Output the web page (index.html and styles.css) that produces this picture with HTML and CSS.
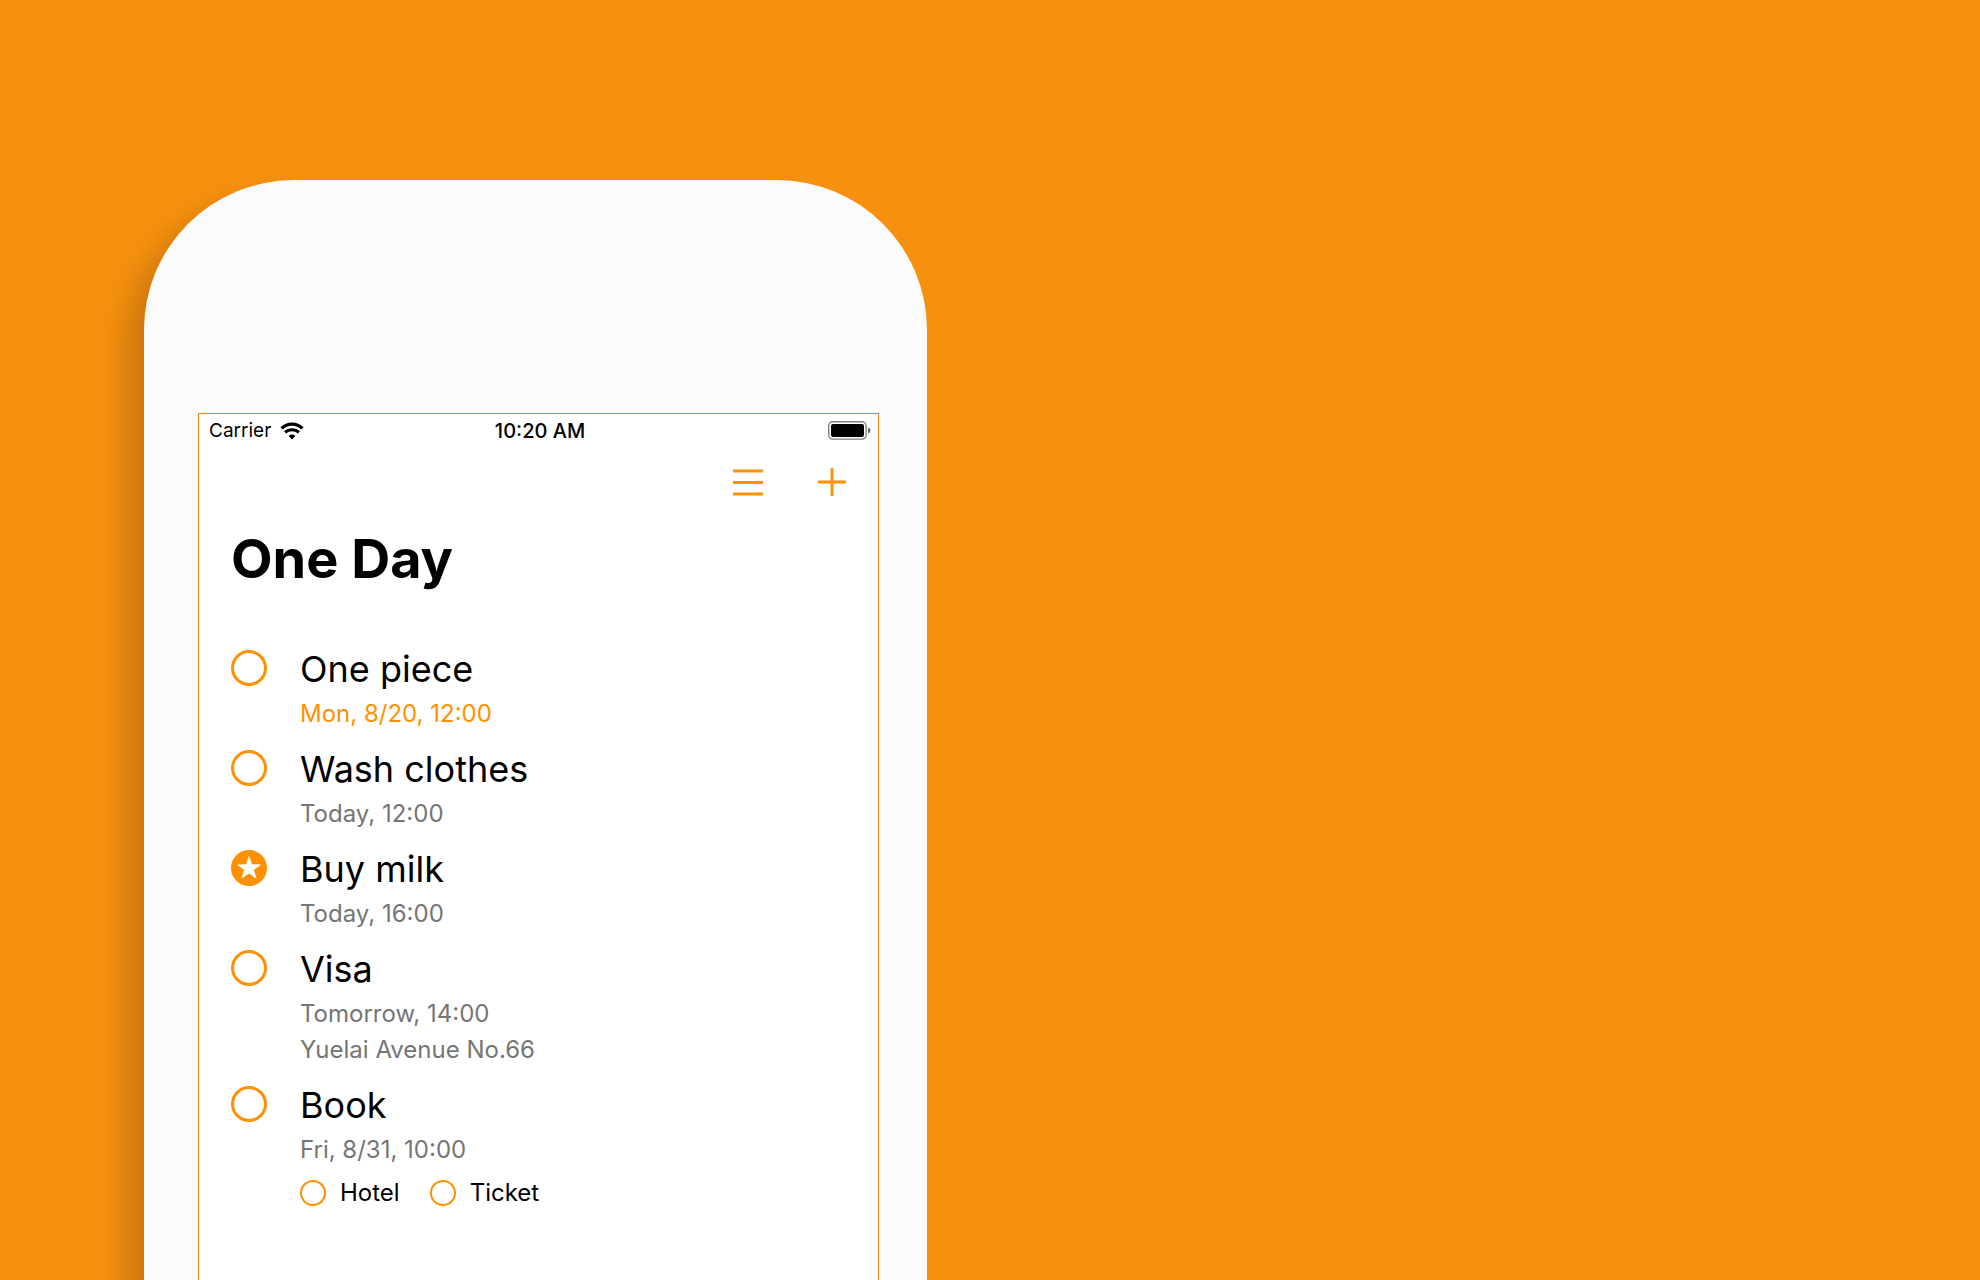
FILE: index.html
```html
<!DOCTYPE html>
<html lang="en">
<head>
<meta charset="utf-8">
<meta name="viewport" content="width=device-width, initial-scale=1">
<title>One Day</title>
<link rel="stylesheet" href="styles.css">
</head>
<body>
<main class="stage">
  <div class="phone">
    <div class="screen">
      <div class="status">
        <div class="status-side">
          <span>Carrier</span>
          <svg class="wifi" width="24" height="18" viewBox="0 0 24 18" aria-hidden="true">
            <path d="M1.5 6.4A15 15 0 0 1 22.5 6.4" fill="none" stroke="#000" stroke-width="3.2"/>
            <path d="M5.1 10.4A10 10 0 0 1 18.900 10.4" fill="none" stroke="#000" stroke-width="3"/>
            <path d="M8.600 14A5.2 5.2 0 0 1 15.400 14L12 17.4Z" fill="#000"/>
          </svg>
        </div>
        <time class="clock">10:20 AM</time>
        <div class="status-side status-end">
          <svg width="43" height="19" viewBox="0 0 43 19" aria-hidden="true">
            <rect x=".7" y=".7" width="37.4" height="17.4" rx="4" fill="#fff" stroke="#808080" stroke-width="1.4"/>
            <rect x="3" y="3" width="33" height="13" rx="2" fill="#000"/>
            <path d="M40 6.4Q42.4 7 42.4 9.4T40 12.4Z" fill="#666"/>
          </svg>
        </div>
      </div>
      <nav class="actions">
        <button class="action" type="button" aria-label="Lists">
          <svg width="32" height="30" viewBox="0 0 32 30"><path d="M1 4H31M1 15.500H31M1 27H31"/></svg>
        </button>
        <button class="action" type="button" aria-label="Add">
          <svg width="32" height="30" viewBox="0 0 32 30"><path d="M2 15H30M16 1V29"/></svg>
        </button>
      </nav>
      <h1 class="title">One Day</h1>
      <ul class="tasks">
        <li class="task">
          <input class="check" type="checkbox" id="t1">
          <div class="body">
            <label class="name" for="t1">One piece</label>
            <p class="meta due">Mon, 8/20, 12:00</p>
          </div>
        </li>
        <li class="task">
          <input class="check" type="checkbox" id="t2">
          <div class="body">
            <label class="name" for="t2">Wash clothes</label>
            <p class="meta">Today, 12:00</p>
          </div>
        </li>
        <li class="task">
          <span class="mark">
            <input class="check starred" type="checkbox" id="t3">
            <svg class="star" width="36" height="36" viewBox="0 0 36 36" aria-hidden="true"><path d="M18 5.500L21 14.200L30.200 14.400L22.900 20L25.600 28.800L18 23.600L10.400 28.800L13.100 20L5.800 14.400L15 14.200Z" fill="#fff"/></svg>
          </span>
          <div class="body">
            <label class="name" for="t3">Buy milk</label>
            <p class="meta">Today, 16:00</p>
          </div>
        </li>
        <li class="task">
          <input class="check" type="checkbox" id="t4">
          <div class="body">
            <label class="name" for="t4">Visa</label>
            <p class="meta">Tomorrow, 14:00</p>
            <p class="meta">Yuelai Avenue No.66</p>
          </div>
        </li>
        <li class="task">
          <input class="check" type="checkbox" id="t5">
          <div class="body">
            <label class="name" for="t5">Book</label>
            <p class="meta">Fri, 8/31, 10:00</p>
            <div class="subtasks">
              <label class="subtask"><input class="check small" type="checkbox">Hotel</label>
              <label class="subtask"><input class="check small" type="checkbox">Ticket</label>
            </div>
          </div>
        </li>
      </ul>
    </div>
  </div>
</main>
</body>
</html>
```
FILE: styles.css
```css
* {
  box-sizing: border-box;
}

body {
  margin: 0;
  background: #f6900f;
  color: #000;
  font-family: Inter, "Liberation Sans", sans-serif;
}

.stage {
  display: flex;
  min-height: 100vh;
  padding: 180px 144px 0;
  overflow: hidden;
}

.phone {
  display: flex;
  width: 100%;
  max-width: 783px;
  padding: 233px 48px 0 54px;
  border-radius: 150px 150px 0 0;
  background: #fbfbfb;
  box-shadow: -20px 20px 28px rgba(0, 0, 0, 0.17);
}

.screen {
  flex: 1;
  border: 1px solid #f7800f;
  border-bottom: 0;
  background: #fff;
}

.status {
  display: flex;
  align-items: center;
  height: 33px;
  padding: 0 7px 0 10px;
  font-size: 19px;
  line-height: 24px;
}

.status-side {
  display: flex;
  flex: 1;
  align-items: center;
  gap: 9px;
}

.status-end {
  justify-content: flex-end;
}

.clock {
  font-size: 20px;
  font-weight: 500;
}

.actions {
  display: flex;
  justify-content: flex-end;
  gap: 52px;
  padding: 20px 30px 0;
}

.action {
  display: flex;
  padding: 0;
  border: 0;
  background: none;
}

.action path {
  fill: none;
  stroke: #ff9000;
  stroke-width: 2.8;
}

.title {
  margin: 29px 32px 52px;
  font-size: 54px;
  line-height: 66px;
  font-weight: 700;
}

.tasks {
  display: flex;
  flex-direction: column;
  gap: 12px;
  margin: 0;
  padding: 0 32px;
  list-style: none;
}

.task {
  display: flex;
  align-items: flex-start;
  gap: 33px;
}

.check {
  flex: none;
  width: 36px;
  height: 36px;
  margin: 6px 0 0;
  border: 3px solid #ff9000;
  border-radius: 50%;
  background: #fff;
  appearance: none;
}

.check.small {
  width: 26px;
  height: 26px;
  margin: 0;
  border-width: 2px;
}

.check.starred {
  background: #ff9000;
}

.mark {
  display: flex;
  position: relative;
}

.star {
  position: absolute;
  left: 0;
  bottom: 0;
  pointer-events: none;
}

.name {
  display: block;
  margin-bottom: 2px;
  font-size: 36px;
  line-height: 50px;
}

.meta {
  margin: 0;
  color: #757575;
  font-size: 24px;
  line-height: 36px;
}

.due {
  color: #ff9000;
}

.subtasks {
  display: flex;
  gap: 30px;
  padding: 7px 0 32px;
}

.subtask {
  display: flex;
  align-items: center;
  gap: 14px;
  font-size: 24px;
  line-height: 36px;
}
```
